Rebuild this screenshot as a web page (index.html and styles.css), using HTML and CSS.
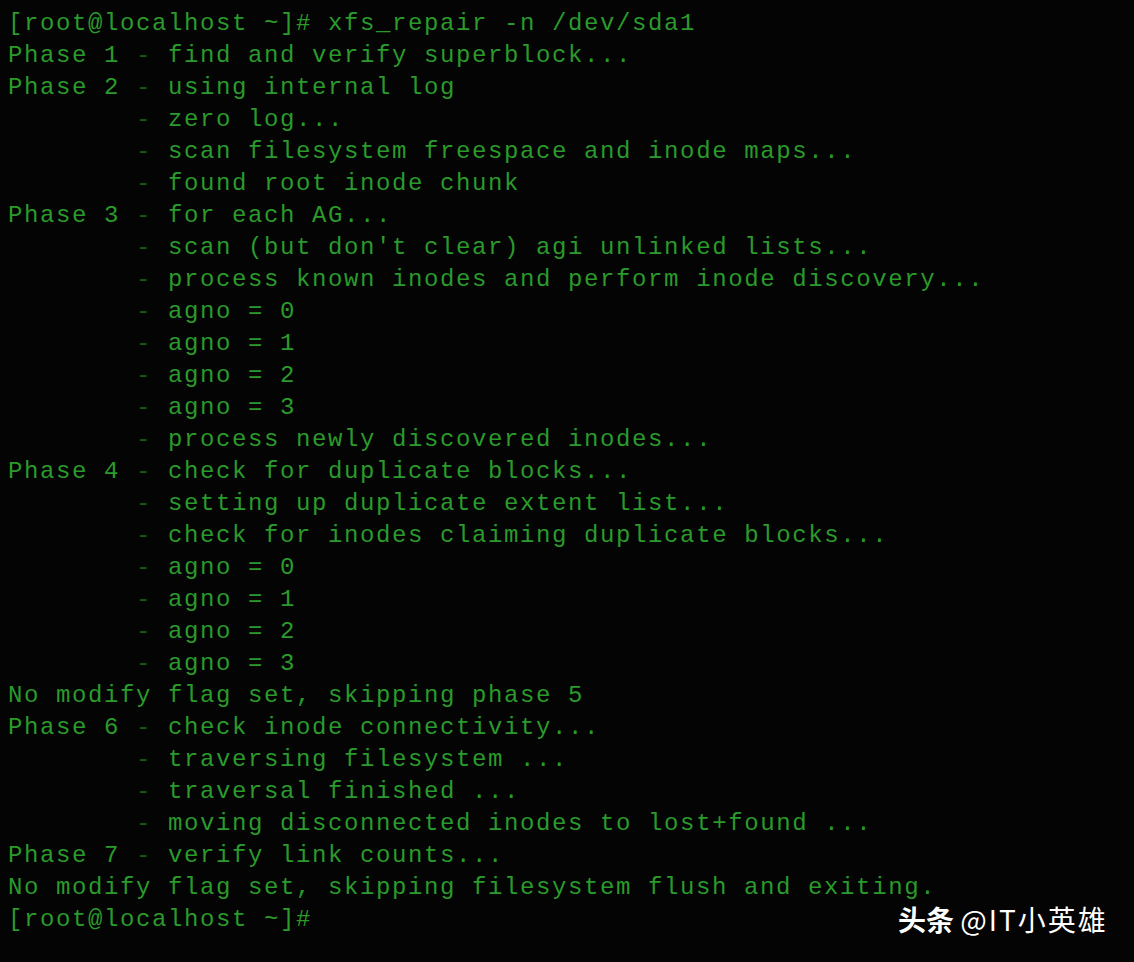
FILE: index.html
```html
<!DOCTYPE html>
<html>
<head>
<meta charset="utf-8">
<link rel="stylesheet" href="styles.css">
</head>
<body>
<div class="screen">
<pre class="term">[root@localhost ~]# xfs_repair -n /dev/sda1
Phase 1 <span class="d">-</span> find and verify superblock...
Phase 2 <span class="d">-</span> using internal log
        <span class="d">-</span> zero log...
        <span class="d">-</span> scan filesystem freespace and inode maps...
        <span class="d">-</span> found root inode chunk
Phase 3 <span class="d">-</span> for each AG...
        <span class="d">-</span> scan (but don't clear) agi unlinked lists...
        <span class="d">-</span> process known inodes and perform inode discovery...
        <span class="d">-</span> agno = 0
        <span class="d">-</span> agno = 1
        <span class="d">-</span> agno = 2
        <span class="d">-</span> agno = 3
        <span class="d">-</span> process newly discovered inodes...
Phase 4 <span class="d">-</span> check for duplicate blocks...
        <span class="d">-</span> setting up duplicate extent list...
        <span class="d">-</span> check for inodes claiming duplicate blocks...
        <span class="d">-</span> agno = 0
        <span class="d">-</span> agno = 1
        <span class="d">-</span> agno = 2
        <span class="d">-</span> agno = 3
No modify flag set, skipping phase 5
Phase 6 <span class="d">-</span> check inode connectivity...
        <span class="d">-</span> traversing filesystem ...
        <span class="d">-</span> traversal finished ...
        <span class="d">-</span> moving disconnected inodes to lost+found ...
Phase 7 <span class="d">-</span> verify link counts...
No modify flag set, skipping filesystem flush and exiting.
[root@localhost ~]#</pre>
<div class="mark"><span class="mark-b">头条</span> <span class="mark-n">@IT小英雄</span></div>
</div>
</body>
</html>
```
FILE: styles.css
```css
html, body {
  margin: 0;
  padding: 0;
  background: #030403;
}
.screen {
  position: relative;
  width: 1134px;
  height: 962px;
  overflow: hidden;
  background: #030403;
}
.term {
  margin: 0;
  padding: 8px 0 0 8px;
  font-family: "Liberation Mono", "DejaVu Sans Mono", monospace;
  font-size: 24px;
  letter-spacing: 1.6px;
  line-height: 32px;
  color: #2b9a2b;
  white-space: pre;
}
.d {
  color: #1a561a;
}
.mark {
  position: absolute;
  left: 898px;
  top: 900px;
  font-family: "Noto Sans CJK SC", "Noto Sans", sans-serif;
  font-size: 28px;
  line-height: 38px;
  color: #ffffff;
  white-space: nowrap;
}
.mark-b {
  font-weight: 700;
}
.mark-n {
  font-weight: 400;
  letter-spacing: 2px;
}
```
